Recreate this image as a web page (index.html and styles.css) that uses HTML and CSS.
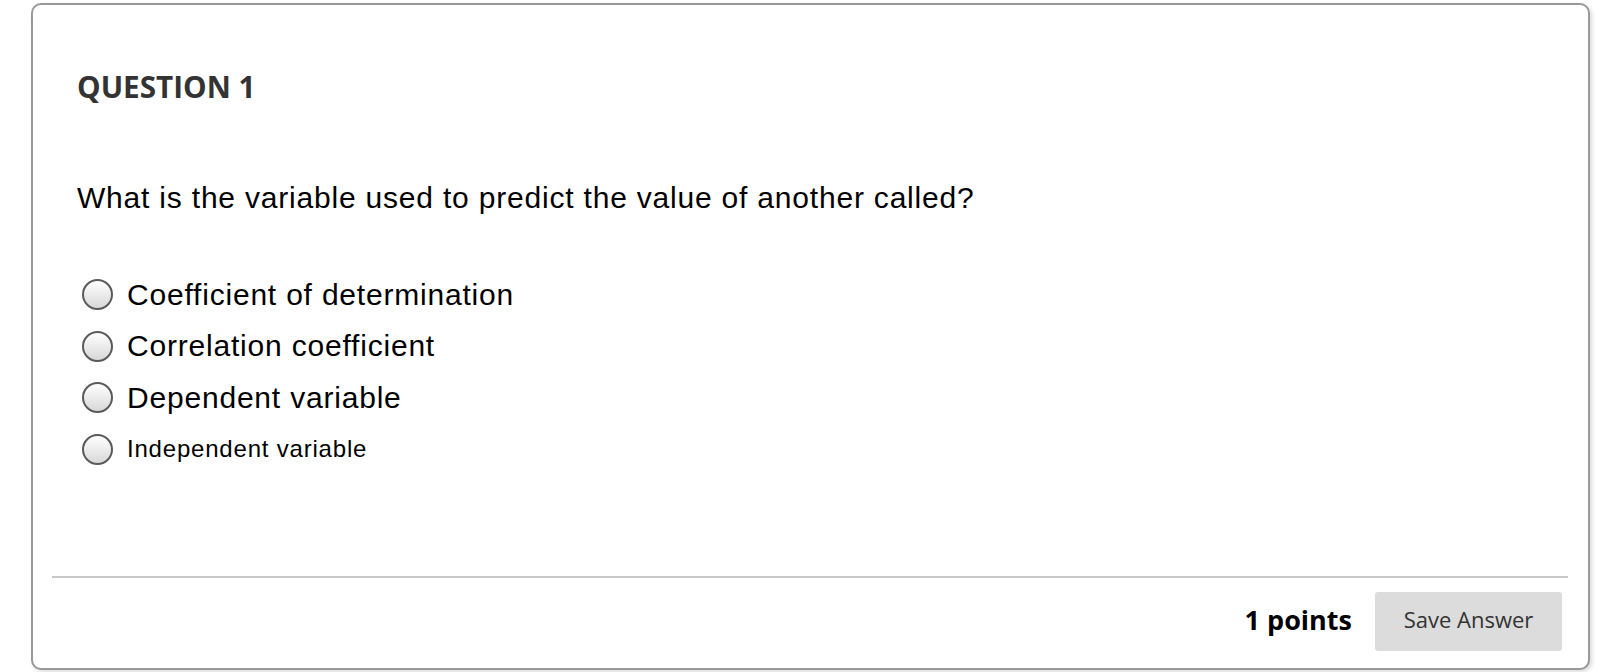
FILE: index.html
```html
<!DOCTYPE html>
<html>
<head>
<meta charset="utf-8">
<link rel="stylesheet" href="styles.css">
</head>
<body>
<div class="card">
  <div class="content">
    <h2 class="title">QUESTION 1</h2>
    <p class="question">What is the variable used to predict the value of another called?</p>
    <ul class="options">
      <li class="option"><span class="radio"></span><span class="label">Coefficient of determination</span></li>
      <li class="option"><span class="radio"></span><span class="label">Correlation coefficient</span></li>
      <li class="option"><span class="radio"></span><span class="label">Dependent variable</span></li>
      <li class="option"><span class="radio"></span><span class="label small">Independent variable</span></li>
    </ul>
  </div>
  <div class="footer">
    <span class="points">1 points</span>
    <button class="save">Save Answer</button>
  </div>
</div>
</body>
</html>
```
FILE: styles.css
```css
html, body {
  margin: 0;
  padding: 0;
  background: #fff;
}
body {
  padding: 3px 30px 2px 31px;
}
.card {
  box-sizing: border-box;
  height: 667px;
  border: 2px solid #999;
  border-radius: 10px;
  box-shadow: 2px 2px 4px rgba(0, 0, 0, 0.15);
  padding: 0 20px 0 19px;
  display: flex;
  flex-direction: column;
  background: #fff;
}
.content {
  flex: 1;
  padding: 64px 0 0 25px;
}
.title {
  margin: 0;
  font-family: "Open Sans", sans-serif;
  font-weight: 700;
  font-size: 29.7px;
  line-height: 36px;
  color: #333;
}
.question {
  margin: 76px 0 0 0;
  font-family: "Liberation Sans", Arial, sans-serif;
  font-size: 30px;
  letter-spacing: 0.8px;
  line-height: 34px;
  color: #000;
}
.options {
  list-style: none;
  margin: 54px 0 0 5px;
  padding: 0;
  display: flex;
  flex-direction: column;
}
.option {
  height: 51.5px;
  display: flex;
  align-items: center;
  gap: 14px;
}
.radio {
  box-sizing: border-box;
  width: 31px;
  height: 31px;
  border-radius: 50%;
  border: 2px solid #5a5a5a;
  background: linear-gradient(#ffffff, #d8d8d8);
  flex: none;
}
.label {
  font-family: "Liberation Sans", Arial, sans-serif;
  font-size: 30px;
  letter-spacing: 0.8px;
  color: #000;
}
.label.small {
  font-size: 24px;
  letter-spacing: 0.8px;
}
.footer {
  border-top: 2px solid #c8c8c8;
  padding: 14px 6px 17px 0;
  display: flex;
  justify-content: flex-end;
  align-items: center;
  gap: 23px;
}
.points {
  font-family: "Open Sans", sans-serif;
  font-weight: 700;
  font-size: 27px;
  color: #000;
  padding-bottom: 4px;
}
.save {
  width: 187px;
  height: 59px;
  border: none;
  border-radius: 3px;
  background: #dcdcdc;
  font-family: "Open Sans", sans-serif;
  font-size: 22px;
  color: #333;
  padding: 0 0 5px 0;
}
```
